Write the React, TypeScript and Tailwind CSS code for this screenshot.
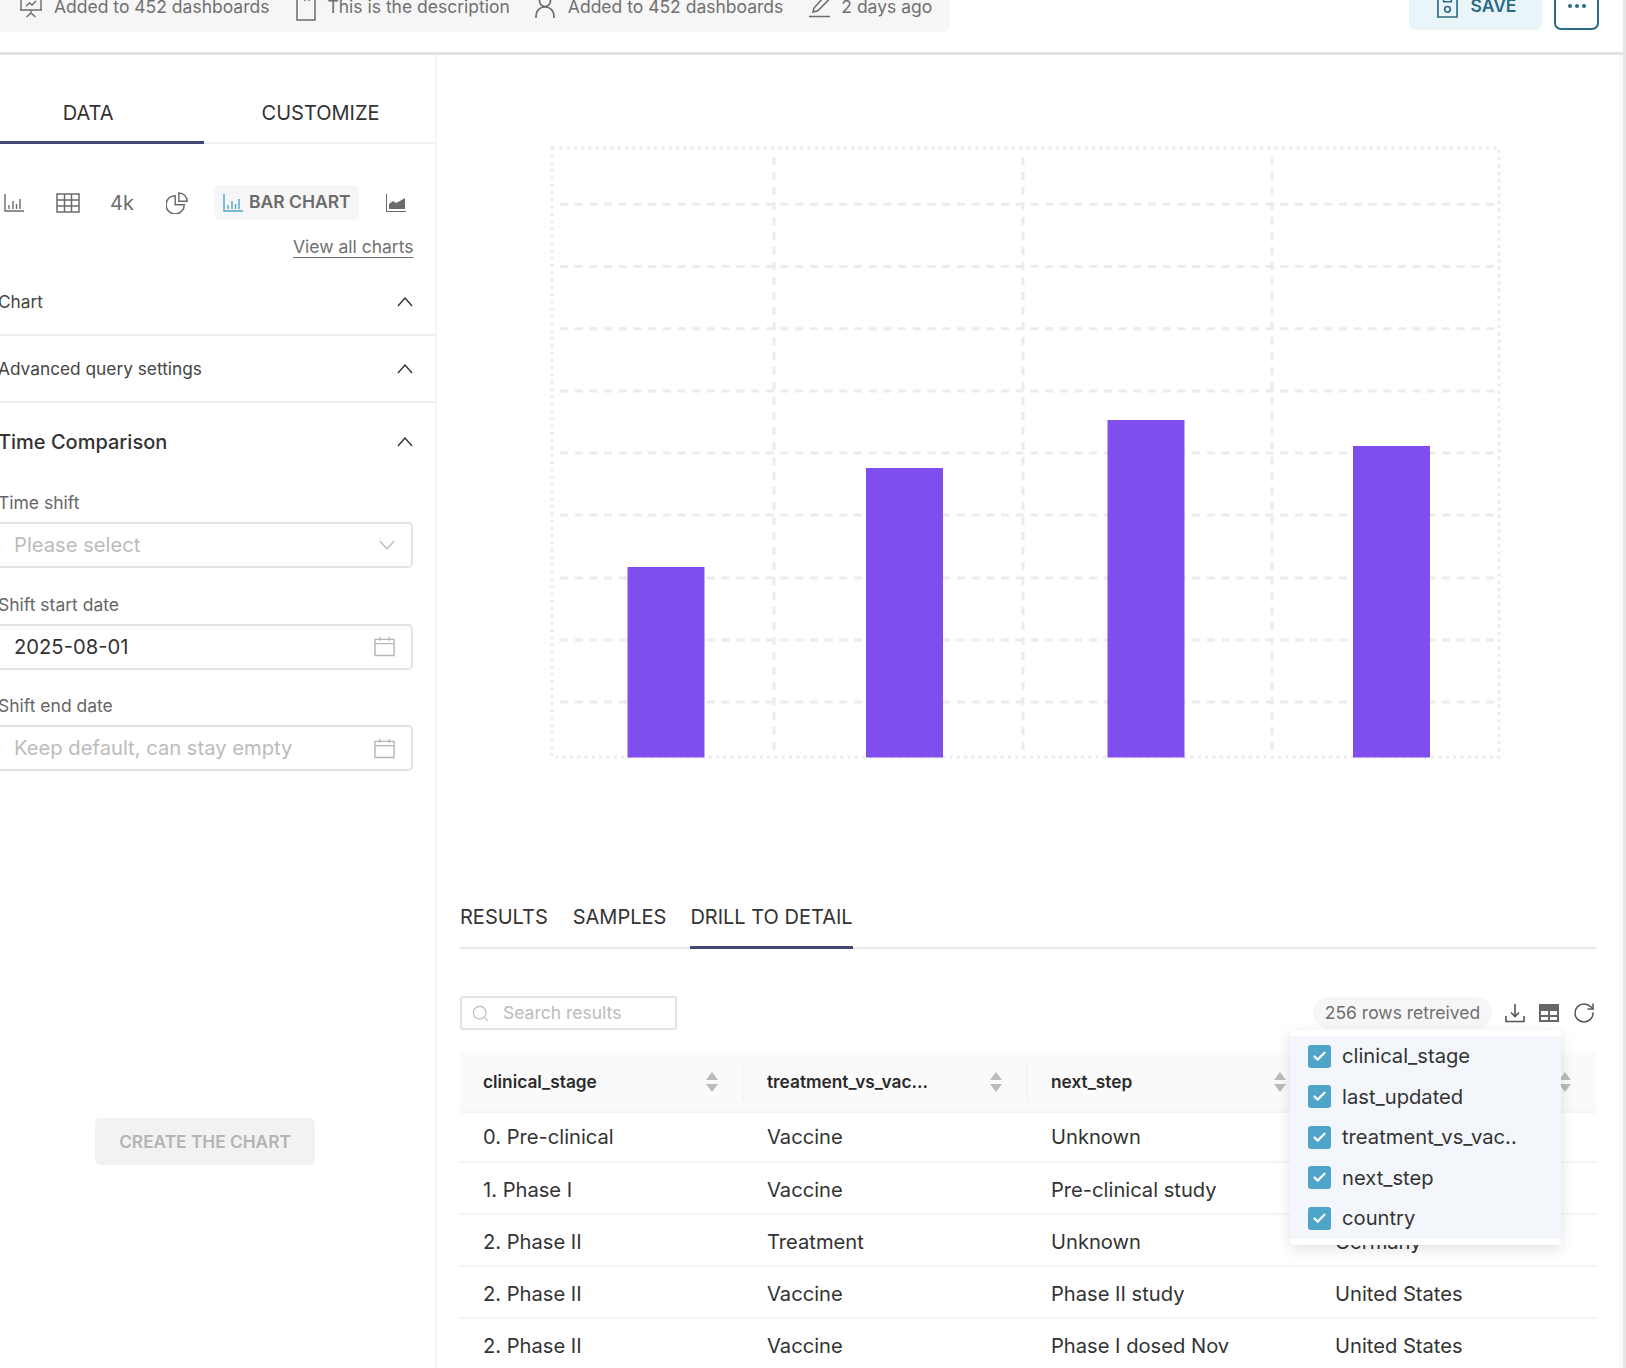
import { Check, Search, RotateCw } from "lucide-react";

const headerItems = [
  { icon: "board", text: "Added to 452 dashboards", iconClass: "ml-[19px] w-6", gap: "ml-[11px]" },
  { icon: "doc", text: "This is the description", iconClass: "ml-[27px] w-5", gap: "ml-[11px]" },
  { icon: "user", text: "Added to 452 dashboards", iconClass: "ml-[25px] w-5", gap: "ml-[13px]" },
  { icon: "pencil", text: "2 days ago", iconClass: "ml-[26px] w-[22px]", gap: "ml-[10px]" },
];

const HeaderIcon = ({ name }: { name: string }) => {
  if (name === "board") {
    return (
      <svg viewBox="0 0 24 24" className="w-6 h-6" fill="none" stroke="#6b6b6b" strokeWidth="1.4">
        <path d="M2 1v14h20V1M1 15h22M12 15v3M7.5 22l4.5-4 4.5 4M7 11l3.500-3 2.500 2 4-4" />
      </svg>
    );
  }
  if (name === "doc") {
    return (
      <svg viewBox="0 0 20 28" className="w-5 h-7" fill="none" stroke="#6b6b6b" strokeWidth="1.5">
        <path d="M1 0v27h18V0H1M9 0v7l2-1.500 2 1.500V0" />
      </svg>
    );
  }
  if (name === "user") {
    return (
      <svg viewBox="0 0 20 24" className="w-5 h-6" fill="none" stroke="#6b6b6b" strokeWidth="1.700">
        <circle cx="10" cy="6" r="5.500" />
        <path d="M1 23v-2c0-5 3.500-9 9-9s9 4 9 9v2" />
      </svg>
    );
  }
  return (
    <svg viewBox="0 0 22 24" className="w-[22px] h-6" fill="none" stroke="#6b6b6b" strokeWidth="1.500">
      <path d="M4 17l1-4L15 2l4 3.500L8.500 16 4 17zM0 21.500h21" />
    </svg>
  );
};

const SmallBars = ({ color = "#6b6b6b" }: { color?: string }) => (
  <svg viewBox="0 0 20 20" className="w-5 h-5" fill="none" stroke={color} strokeWidth="1.400">
    <path d="M1 1v17h19M5 12v4M9 8v8M12.500 11v5M16 6v10" />
  </svg>
);

const SortIcon = () => (
  <svg viewBox="0 0 12 20" className="w-3 h-5" fill="#bbbbbb">
    <path d="M6 0l6 8H0zM0 12h12l-6 8z" />
  </svg>
);

const Calendar = () => (
  <svg viewBox="0 0 22 22" className="w-[21px] h-[21px]" fill="none" stroke="#b5b5b5" strokeWidth="1.500">
    <path d="M1 3.500h20v17H1zM1 8h20M6 1v4M16 1v4" />
  </svg>
);

const Accordion = ({ label, className, textClass }: { label: string; className: string; textClass: string }) => (
  <div className={`flex items-center justify-between pr-[22px] ${className}`}>
    <span className={`-ml-[2px] ${textClass}`}>{label}</span>
    <svg viewBox="0 0 16 10" className="w-4 h-[10px]" fill="none" stroke="#333" strokeWidth="1.400">
      <path d="M1 9l7-8 7 8" />
    </svg>
  </div>
);

const Field = ({ label, value, right, dark }: { label: string; value: string; right: "chevron" | "calendar"; dark?: boolean }) => (
  <div className="h-[101.500px] shrink-0 flex flex-col">
    <div className="h-[33px] text-[17.500px] leading-[24px] text-[#666] -ml-[2px] pt-[5px]">{label}</div>
    <div className="h-[46px] w-[419px] -ml-[6px] mt-[3px] border-2 border-[#e3e3e3] rounded-[5px] flex items-center justify-between pl-[18px] pr-[16px]">
      <span className={`text-[20.200px] pt-[1px] ${dark ? "text-[#333]" : "text-[#bcbcbc]"}`}>{value}</span>
      {right === "chevron" ? (
        <svg viewBox="0 0 16 10" className="w-4 h-[10px]" fill="none" stroke="#bdbdbd" strokeWidth="1.300">
          <path d="M1 1l7 8 7-8" />
        </svg>
      ) : (
        <Calendar />
      )}
    </div>
  </div>
);

const tableRows = [
  ["0. Pre-clinical", "Vaccine", "Unknown", ""],
  ["1. Phase I", "Vaccine", "Pre-clinical study", ""],
  ["2. Phase II", "Treatment", "Unknown", "Germany"],
  ["2. Phase II", "Vaccine", "Phase II study", "United States"],
  ["2. Phase II", "Vaccine", "Phase I dosed Nov", "United States"],
];

const columns = ["clinical_stage", "treatment_vs_vac...", "next_step", ""];
const menuItems = ["clinical_stage", "last_updated", "treatment_vs_vac..", "next_step", "country"];
const barData = [
  { x: 627.5, top: 567 },
  { x: 866, top: 468 },
  { x: 1107.5, top: 420 },
  { x: 1353, top: 446 },
];

const BarChart = () => {
  const left = 552;
  const top = 148;
  const horizontals = [204.3, 266.5, 328.7, 391, 453, 515, 578, 640, 702];
  const verticals = [774, 1023, 1272];
  return (
    <svg width={960} height={625} viewBox="545 140 960 625" className="block">
      <rect x={left} y={top} width={947} height={609} fill="none" stroke="#ececec" strokeWidth="3" strokeDasharray="3 4.300" />
      {horizontals.map((y) => (
        <path key={y} d={`M560 ${y}H1498`} stroke="#ececec" strokeWidth="3" strokeDasharray="8 6.700" />
      ))}
      {verticals.map((x) => (
        <path key={x} d={`M${x} 157V757`} stroke="#ececec" strokeWidth="3" strokeDasharray="8 7" />
      ))}
      {barData.map((b) => (
        <rect key={b.x} x={b.x} y={b.top} width={77} height={757.500 - b.top} fill="#814eee" />
      ))}
    </svg>
  );
};

const ResultsTable = () => (
  <div className="mt-[23px]">
    <div className="grid grid-cols-[284px_284px_284px_283px] h-[60px] bg-[#fafafa] border-b-2 border-[#f5f5f5] items-center">
      {columns.map((col, i) => (
        <div key={i} className="h-[36px] flex items-center justify-between pl-[23px] pr-[24px] border-r-2 border-[#f4f4f4] last:border-r-0">
          <span className="text-[17.300px] font-semibold text-[#2a2a2a]">{col}</span>
          <SortIcon />
        </div>
      ))}
    </div>
    {tableRows.map((row, i) => (
      <div key={i} className={`grid grid-cols-[284px_284px_284px_283px] border-b-2 border-[#f5f5f5] items-center ${i === 0 ? "h-[50px]" : "h-[52px]"}`}>
        {row.map((cell, j) => (
          <div key={j} className={`pl-[23px] text-[20.150px] text-[#333] whitespace-nowrap ${i === 0 ? "" : "pt-[4px]"}`}>
            {cell}
          </div>
        ))}
      </div>
    ))}
  </div>
);

export default function App() {
  return (
    <div className="w-[1626px] h-[1368px] overflow-hidden bg-white border-r-[3px] border-[#e5e5e5] font-['Inter',sans-serif] text-[#333]">
      <header className="h-[55px] border-b-[3px] border-[#e2e2e2] flex justify-between items-start">
        <div className="w-[950px] h-[50px] -mt-[18px] bg-[#f6f6f6] rounded-br-[8px] flex items-center text-[17.500px] text-[#707070]">
          {headerItems.map((item, i) => (
            <div key={i} className="flex items-center">
              <span className={`${item.iconClass} flex justify-center`}>
                <HeaderIcon name={item.icon} />
              </span>
              <span className={`${item.gap} whitespace-nowrap`}>{item.text}</span>
            </div>
          ))}
        </div>
        <div className="flex items-start pr-[24px] -mt-[18px]">
          <button className="w-[133px] h-[48px] bg-[#e9f5f8] rounded-[7px] flex items-center justify-center gap-[13px] pl-[2px] text-[#2c6a85] font-semibold text-[17.500px]">
            <svg viewBox="0 0 22 24" className="w-[21px] h-[23px]" fill="none" stroke="#2c6a85" strokeWidth="1.700">
              <path d="M1 1h16l4 4v18H1zM7 1v6h8V1" />
              <circle cx="11" cy="15" r="3" />
            </svg>
            SAVE
          </button>
          <button className="w-[45px] h-[48px] ml-[12px] border-2 border-[#2c6a85] rounded-[7px] flex items-center justify-center gap-[3px]">
            <span className="w-1 h-1 rounded-full bg-[#2c6a85]" />
            <span className="w-1 h-1 rounded-full bg-[#2c6a85]" />
            <span className="w-1 h-1 rounded-full bg-[#2c6a85]" />
          </button>
        </div>
      </header>

      <div className="flex h-[1313px]">
        <aside className="w-[437px] shrink-0 border-r-2 border-[#f5f5f5] flex flex-col">
          <div className="h-[89px] border-b-2 border-[#f0f0f0] flex">
            <div className="w-[205px] h-[89px] border-b-[3px] border-[#414a75] text-[20px] flex items-center justify-center pr-[28px] pt-[29px]">DATA</div>
            <div className="w-[232px] h-[87px] text-[20px] flex items-center justify-center pl-[2px] pt-[29px]">CUSTOMIZE</div>
          </div>

          <div className="h-[35px] mt-[41px] flex items-center text-[#6b6b6b] pl-[4px]">
            <SmallBars />
            <svg viewBox="0 0 24 20" className="w-6 h-5 ml-[32px]" fill="none" stroke="#6b6b6b" strokeWidth="1.500">
              <path d="M1 1h22v18H1zM1 7h22M1 13h22M8.500 1v18M15.500 1v18" />
            </svg>
            <span className="ml-[30px] text-[20px]">4k</span>
            <svg viewBox="0 0 24 24" className="w-[22px] h-[22px] ml-[32px] mr-[1px]" fill="none" stroke="#6b6b6b" strokeWidth="1.600">
              <path d="M10 4a10 10 0 1 0 10 10H10zM14 1a9 9 0 0 1 9 9h-9z" />
            </svg>
            <div className="ml-[25px] w-[145px] h-[35px] bg-[#f6f6f6] rounded-[6px] flex items-center pl-[9px] gap-[6px] font-semibold text-[17.500px] text-[#6b6b6b]">
              <SmallBars color="#4ea5c9" />
              BAR CHART
            </div>
            <svg viewBox="0 0 20 20" className="w-5 h-5 ml-[27px]" fill="#6b6b6b">
              <path d="M1 1v17h19v1H0V1z" />
              <path d="M3 16v-5l4-3 3 2 4-2 5-3v11z" />
            </svg>
          </div>
          <div className="pl-[293px] mt-[15px] h-[24px]">
            <a className="text-[17.500px] leading-[24px] text-[#707070] underline underline-offset-[4px] block w-fit">View all charts</a>
          </div>

          <Accordion label="Chart" className="mt-[10px] h-[67px] border-b-2 border-[#eeeeee]" textClass="text-[17.300px] text-[#444]" />
          <Accordion label="Advanced query settings" className="h-[67px] border-b-2 border-[#eeeeee]" textClass="text-[17.300px] text-[#444]" />
          <Accordion label="Time Comparison" className="h-[78px]" textClass="text-[20px] font-medium text-[#333]" />

          <div className="mt-[5px]">
            <Field label="Time shift" value="Please select" right="chevron" />
            <Field label="Shift start date" value="2025-08-01" right="calendar" dark />
            <Field label="Shift end date" value="Keep default, can stay empty" right="calendar" />
          </div>

          <div className="pl-[95px] mt-[327px]">
            <button className="w-[220px] h-[47px] pt-[2px] bg-[#f2f2f2] rounded-[5px] text-[#b4b4b4] font-semibold text-[17.300px]">CREATE THE CHART</button>
          </div>
        </aside>

        <main className="flex-1 min-w-0 pl-[23px] pr-[23px] border-r-[4px] border-[#f9f9f9] relative">
          <div className="h-[628px] pt-[85px] pl-[85px]">
            <BarChart />
          </div>

          <div className="mt-[218px] h-[48px] border-b-2 border-[#e8e8e8] flex text-[20px] text-[#333]">
            <div className="h-[48px] flex items-center pb-[17px]">RESULTS</div>
            <div className="h-[48px] flex items-center pb-[17px] ml-[25px]">SAMPLES</div>
            <div className="h-[48px] w-[163px] flex items-center pb-[14px] ml-[24px] border-b-[3px] border-[#414a75]">DRILL TO DETAIL</div>
          </div>

          <div className="mt-[47px] h-[34px] flex items-center justify-between">
            <div className="w-[217px] h-[34px] border-2 border-[#e3e3e3] rounded-[3px] flex items-center pl-[9px] gap-[13px] text-[17.500px] text-[#bbbbbb]">
              <Search className="w-[19px] h-[19px] text-[#bbbbbb]" strokeWidth={1.500} />
              Search results
            </div>
            <div className="flex items-center">
              <div className="w-[179px] h-[32px] rounded-full bg-[#f6f6f6] flex items-center justify-center text-[17.500px] text-[#707070]">256 rows retreived</div>
              <svg viewBox="0 0 20 20" className="w-5 h-5 ml-[13px]" fill="none" stroke="#555" strokeWidth="1.600">
                <path d="M10 1v12M6 9.500l4 4 4-4M1 13v5.500h18V13" />
              </svg>
              <svg viewBox="0 0 20 20" className="w-5 h-5 ml-[14px]" fill="#666">
                <path d="M0 1h20v18H0zM2 8v4h7V8zm9 0v4h7V8zm-9 6v3h7v-3zm9 0v3h7v-3z" fillRule="evenodd" />
              </svg>
              <RotateCw className="w-[24px] h-[24px] ml-[13px] text-[#555]" strokeWidth={1.500} />
            </div>
          </div>

          <ResultsTable />

          <div className="absolute left-[853px] top-[975px] w-[271px] h-[215px] bg-white rounded-[4px] shadow-[0_4px_14px_rgba(0,0,0,0.12)] py-[6px]">
            <div className="bg-[#f3f7fb] h-[203px]">
              {menuItems.map((item) => (
                <div key={item} className="h-[40.500px] flex items-center pl-[18px] gap-[11px] text-[20.200px] text-[#333]">
                  <span className="w-[23px] h-[23px] bg-[#4ea5c9] rounded-[3px] flex items-center justify-center">
                    <Check className="w-[15px] h-[15px] text-white" strokeWidth={3.500} />
                  </span>
                  {item}
                </div>
              ))}
            </div>
          </div>
        </main>
      </div>
    </div>
  );
}
